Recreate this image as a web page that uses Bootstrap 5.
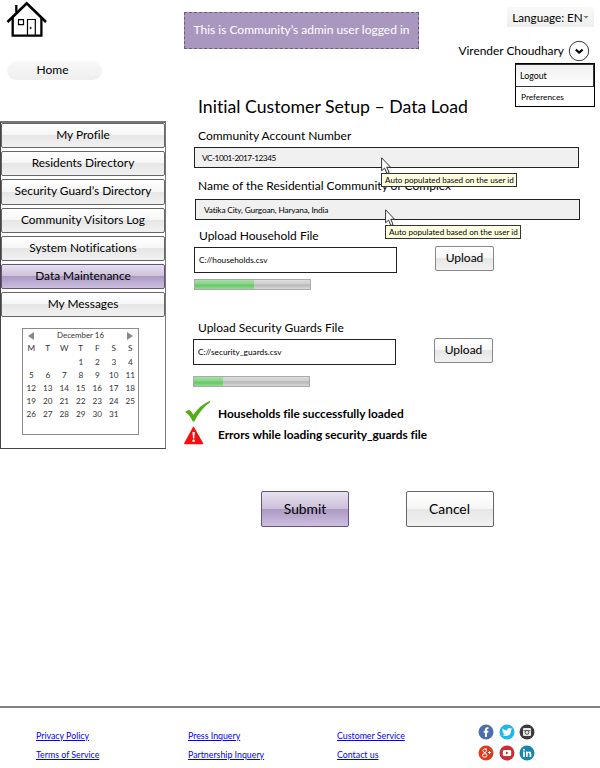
<!DOCTYPE html>
<html lang="en">
<head>
<meta charset="utf-8">
<meta name="viewport" content="width=device-width, initial-scale=1">
<title>Initial Customer Setup – Data Load</title>
<link href="https://cdn.jsdelivr.net/npm/bootstrap@5.3.0/dist/css/bootstrap.min.css" rel="stylesheet">
<style>
body{font-family:Lato,"Liberation Sans",sans-serif;font-size:12px;line-height:18px;color:#000;background:#fff;font-variant-ligatures:none}
.page{width:600px;height:768px;overflow:hidden}
.top-bar{height:92px}
.col-home{width:184px;padding:1px 0 0 6px}
.house{width:42px;height:37px}
.home-link{width:95px;height:19px;margin:23px 0 0 1px;padding-right:4px;border-radius:10px;background:linear-gradient(#f9f9f9,#eee);color:#000}
.home-link span{margin-top:-2px}
.banner{width:235px;height:37px;margin-top:12px;padding-bottom:1px;background:#a997bf;border:1px dashed #6d5a86;color:#fff}
.col-user{width:181px;padding:7px 6px 0 0}
.lang{width:87px;height:20px;background:linear-gradient(#f9f9f9,#eee);font-size:11.7px}
.user-row{margin-top:13px;height:22px;font-size:11.9px}
.user-menu{width:80px;right:5px;top:63px;border:1px solid #000;background:#fff;z-index:3;font-size:8.3px}
.user-menu a{height:19px;padding-left:5px;color:#000}
.user-menu a:first-child{height:23px;padding-left:4px;background:linear-gradient(#efefef,#fff);border:1px solid #333;border-width:1px 1px 1px 0;font-size:8.8px}
.side{width:166px;height:328px;margin-top:29px;border:1px solid #444;border-top:2px solid #777;border-right-color:#777}
.side-nav{gap:3px}
.glossy{border:1px solid #666;border-radius:2px;color:#000;background:linear-gradient(#fff,#f6f6f6 50%,#e6e6e6 50%,#f1f1f1)}
.side-nav .glossy{height:25.2px;padding-bottom:1px;font-size:11.9px}
.glossy.violet{border-color:#65527f;background:linear-gradient(#e6e0ee,#cbc0d9 50%,#ab99c2 50%,#cdbfe0)}
.calendar{width:117px;height:107px;margin:11px 0 0 21px;border:1px solid #8a8a8a;font-size:8.2px;line-height:13.2px;color:#333}
.cal-grid{display:grid;grid-template-columns:repeat(7,16.5px);text-align:center}
.cal-title{height:13px;padding:0 5px;font-size:7.9px}
.content-col{width:400px;margin-left:28px;padding-top:2px}
.content-col h1{font-size:17.7px;line-height:26px;margin:0 0 7px 4px;font-weight:400}
.field-label{height:20px;line-height:18px;padding-left:4px;white-space:nowrap}
.label-name{height:31px;padding-top:9px}
.label-house{height:27px;padding-top:7px;padding-left:5px}
.label-guard{height:49px;padding-top:29px}
.ro,.file-box{border:1px solid #222;padding-left:8px;font-size:8.3px}
.ro{width:385px;height:21px;background:#f0f0f0;letter-spacing:-.17px}
.ro.account{padding-left:7px;letter-spacing:-.5px}
.field-two{margin-left:1px}
.file-box{width:203px;height:26px;padding-left:4px}
.up-btn{width:59px;height:25px;border-color:#888;margin:-1px 0 0 38px;font-size:12px;padding-bottom:1px!important}
.meter{width:117px;height:11px;margin-top:6px;border:1px solid #aaa;border-radius:0;background:linear-gradient(#ddd,#d0d0d0 40%,#b7b7b7 55%,#d8d8d8)}
.meter .progress-bar{background:linear-gradient(#a6dfa6,#8ad68a 40%,#66c866 60%,#90dd90)}
.guards .meter{margin-top:11px}
.guards{margin-left:-1px}
.guards .field-label{padding-left:5px}
.hint{z-index:2;left:187px;top:10px;width:136px}
.hint.lower{left:190px}
.hint span{display:block;height:14px;margin-top:-2px;border:1px solid #333;background:#ffffe1;font-size:8.1px;line-height:12px;padding-left:3px;white-space:nowrap}
.hint svg{display:block}
.messages{margin:16px 0 0 -10px}
.msg{height:21.5px;font-weight:700;font-size:11.9px;letter-spacing:-.02px}
.msg-icon{width:34px}
.msg-ok{padding-bottom:5px}
.actions{margin:45px 0 0 67px;gap:56.5px}
.big-btn{width:88px;height:36px;font-size:13.8px}
.foot{margin-top:179px;border-top:2px solid #808080;height:62px;font-size:8.8px;padding-left:36px}
.foot a{color:#00f;display:block;height:19px;line-height:19px}
.foot-col{padding-top:17.5px;width:152px}
.foot-col.press{width:149px}
.foot-col.customer{width:141px}
.social{display:grid;grid-template-columns:repeat(3,16px);grid-auto-rows:16px;align-content:start;gap:5px 4.5px;padding-top:16px}
</style>
</head>
<body>
<div class="page position-relative">
<header class="top-bar d-flex">
  <div class="col-home">
    <svg class="house d-block" viewBox="0 0 42 37" fill="none" stroke="#000"><path d="M1.5 21 20.7 2.3 40 21" stroke-width="2.6"/><path d="M6.7 17v17.7h28.7V17" stroke-width="2.3"/><path d="M10.3 11V4" stroke-width="2.3"/><path d="M12.5 18.7h5v5h-5z" stroke-width="1.2"/><path d="M21.5 34V18.5h7.8V34" stroke-width="1.2"/><circle cx="24.6" cy="27" r=".8" fill="#000" stroke-width=".5"/></svg>
    <a href="#" class="home-link d-flex align-items-center justify-content-center text-decoration-none"><span>Home</span></a>
  </div>
  <div class="banner d-flex align-items-center justify-content-center text-nowrap">This is Community’s admin user logged in</div>
  <div class="col-user d-flex flex-column align-items-end">
    <div class="lang d-flex align-items-center justify-content-center text-nowrap">Language: EN<svg width="6" height="4" viewBox="0 0 6 4"><path d="M.5 1h5L3 3.5z" fill="#777"/></svg></div>
    <div class="user-row d-flex align-items-center me-1 gap-1 text-nowrap">Virender Choudhary<svg width="22" height="22" viewBox="0 0 22 22" fill="none" stroke="#222"><circle cx="11" cy="11" r="9.7" stroke-width=".9"/><path d="m7.8 9.6 3.4 3 3.4-3" stroke="#000" stroke-width="2.1"/></svg></div>
  </div>
</header>
<nav class="user-menu position-absolute">
  <a href="#" class="d-flex align-items-center text-decoration-none">Logout</a>
  <a href="#" class="d-flex align-items-center text-decoration-none">Preferences</a>
</nav>
<main class="d-flex">
  <aside class="side">
    <nav class="side-nav d-flex flex-column">
      <a href="#" class="glossy d-flex align-items-center justify-content-center text-decoration-none">My Profile</a>
      <a href="#" class="glossy d-flex align-items-center justify-content-center text-decoration-none">Residents Directory</a>
      <a href="#" class="glossy d-flex align-items-center justify-content-center text-decoration-none">Security Guard’s Directory</a>
      <a href="#" class="glossy d-flex align-items-center justify-content-center text-decoration-none">Community Visitors Log</a>
      <a href="#" class="glossy d-flex align-items-center justify-content-center text-decoration-none">System Notifications</a>
      <a href="#" class="glossy violet d-flex align-items-center justify-content-center text-decoration-none">Data Maintenance</a>
      <a href="#" class="glossy d-flex align-items-center justify-content-center text-decoration-none">My Messages</a>
    </nav>
    <div class="calendar">
      <div class="cal-title d-flex align-items-center justify-content-between"><svg width="6" height="8"><path d="M6 0v8L0 4z" fill="#888"/></svg><span>December 16</span><svg width="6" height="8"><path d="M0 0v8l6-4z" fill="#888"/></svg></div>
      <div class="cal-grid">
        <span>M</span><span>T</span><span>W</span><span>T</span><span>F</span><span>S</span><span>S</span>
        <span></span><span></span><span></span><span>1</span><span>2</span><span>3</span><span>4</span>
        <span>5</span><span>6</span><span>7</span><span>8</span><span>9</span><span>10</span><span>11</span>
        <span>12</span><span>13</span><span>14</span><span>15</span><span>16</span><span>17</span><span>18</span>
        <span>19</span><span>20</span><span>21</span><span>22</span><span>23</span><span>24</span><span>25</span>
        <span>26</span><span>27</span><span>28</span><span>29</span><span>30</span><span>31</span>
      </div>
    </div>
  </aside>
  <section class="content-col">
    <h1 class="text-nowrap">Initial Customer Setup – Data Load</h1>
    <div class="field-label">Community Account Number</div>
    <div class="position-relative">
      <div class="ro account d-flex align-items-center">VC-1001-2017-12345</div>
      <div class="hint position-absolute"><svg width="14" height="18" viewBox="0 0 14 18"><path d="M.6.8v13l3-2.7 2.3 5.4 2.2-1-2.3-5.2h3.8z" fill="#fff" stroke="#333"/></svg><span>Auto populated based on the user id</span></div>
    </div>
    <div class="field-label label-name">Name of the Residential Community or Complex</div>
    <div class="position-relative field-two">
      <div class="ro d-flex align-items-center">Vatika City, Gurgoan, Haryana, India</div>
      <div class="hint lower position-absolute"><svg width="14" height="18" viewBox="0 0 14 18"><path d="M.6.8v13l3-2.7 2.3 5.4 2.2-1-2.3-5.2h3.8z" fill="#fff" stroke="#333"/></svg><span>Auto populated based on the user id</span></div>
    </div>
    <div class="field-label label-house">Upload Household File</div>
    <div class="d-flex align-items-start">
      <div class="file-box d-flex align-items-center">C://households.csv</div>
      <button class="glossy up-btn p-0">Upload</button>
    </div>
    <div class="progress meter"><div class="progress-bar" style="width:51%"></div></div>
    <div class="guards">
      <div class="field-label label-guard">Upload Security Guards File</div>
      <div class="d-flex align-items-start">
        <div class="file-box d-flex align-items-center">C://security_guards.csv</div>
        <button class="glossy up-btn p-0">Upload</button>
      </div>
      <div class="progress meter"><div class="progress-bar" style="width:25.5%"></div></div>
    </div>
    <div class="messages">
      <div class="msg d-flex align-items-center"><div class="msg-icon msg-ok"><svg class="d-block" width="28" height="23" viewBox="0 0 28 23"><path d="M1 11.8 5.2 9.8q2.6 1.8 4.2 5Q15.5 5.5 26 .8v1.4Q16.5 9 10.3 21.5H8.7Q6.2 15.5 1 11.8z" fill="#52ad18"/></svg></div>Households file successfully loaded</div>
      <div class="msg d-flex align-items-center"><div class="msg-icon"><svg class="d-block" width="20" height="19" viewBox="0 0 20 19"><path d="M9.5 1.5 18.5 17.500H.8z" fill="#f80d10" stroke="#f80d10" stroke-width="1.5" stroke-linejoin="round"/><path d="M8.500 6h2.300l-.5 6.500H9z" fill="#fff"/><circle cx="9.65" cy="14.8" r="1.3" fill="#fff"/></svg></div>Errors while loading security_guards file</div>
    </div>
    <div class="actions d-flex">
      <button class="glossy violet big-btn p-0">Submit</button>
      <button class="glossy big-btn p-0">Cancel</button>
    </div>
  </section>
</main>
<footer class="foot d-flex">
  <div class="foot-col"><a href="#">Privacy Policy</a><a href="#">Terms of Service</a></div>
  <div class="foot-col press"><a href="#">Press Inquery</a><a href="#">Partnership Inquery</a></div>
  <div class="foot-col customer"><a href="#">Customer Service</a><a href="#">Contact us</a></div>
  <div class="social">
    <svg width="16" height="16" viewBox="0 0 16 16"><circle cx="8" cy="8" r="7.5" fill="#4d6fa9"/><path d="M7 13V8.700H5.700V6.800H7V5.500Q7 3.200 9.200 3.200h1.300V5H9.600q-.7 0-.7.7v1.100h1.600l-.3 1.900H8.900V13z" fill="#fff"/></svg>
    <svg width="16" height="16" viewBox="0 0 16 16"><circle cx="8" cy="8" r="7.5" fill="#1fb7ea"/><path d="M3.500 4.500Q5.500 6.500 8 6.500 8 4 10.200 4q1 0 1.500.6l1.200-.4-.7 1.100.9-.2-1 1.100Q12 11.800 7 12q-2 0-3.600-1 1.600 0 2.500-.7-1.300-.2-1.700-1.300h.7Q3.500 8.500 3.500 7l.7.2Q3 6 3.500 4.500z" fill="#fff"/></svg>
    <svg width="16" height="16" viewBox="0 0 16 16"><circle cx="8" cy="8" r="7.5" fill="#3b3b3b"/><rect x="4" y="4" width="8" height="8" rx="1" fill="#e8e8e8"/><path d="M4.500 6.600h7" stroke="#555" stroke-width=".8"/><circle cx="8" cy="8.400" r="1.900" fill="#eee" stroke="#444" stroke-width=".9"/></svg>
    <svg width="16" height="16" viewBox="0 0 16 16"><circle cx="8" cy="8" r="7.5" fill="#dc3c1e"/><g fill="none" stroke="#fff"><ellipse cx="6.700" cy="5.700" rx="1.700" ry="1.800"/><path d="M7 4h2M7 7.500l1 1"/><ellipse cx="6.700" cy="10.400" rx="2.300" ry="1.700"/><path d="M10 7.500h3M11.500 6v3"/></g></svg>
    <svg width="16" height="16" viewBox="0 0 16 16"><circle cx="8" cy="8" r="7.5" fill="#c92f35"/><rect x="3.800" y="5" width="8.400" height="6" rx="1.500" fill="#fff"/><path d="M7 6.400v3.200L9.700 8z" fill="#c92f35"/></svg>
    <svg width="16" height="16" viewBox="0 0 16 16"><circle cx="8" cy="8" r="7.5" fill="#1686b0"/><circle cx="4.900" cy="4.700" r="1" fill="#fff"/><path d="M4 6.500h1.800V12H4zM7 6.500h1.700v.8Q9.300 6.400 10.300 6.400 12.300 6.400 12.300 8.800V12h-1.800V9.200q0-1.200-.9-1.200T8.700 9.200V12H7z" fill="#fff"/></svg>
  </div>
</footer>
</div>
<script src="https://cdn.jsdelivr.net/npm/bootstrap@5.3.0/dist/js/bootstrap.bundle.min.js"></script>
</body>
</html>
